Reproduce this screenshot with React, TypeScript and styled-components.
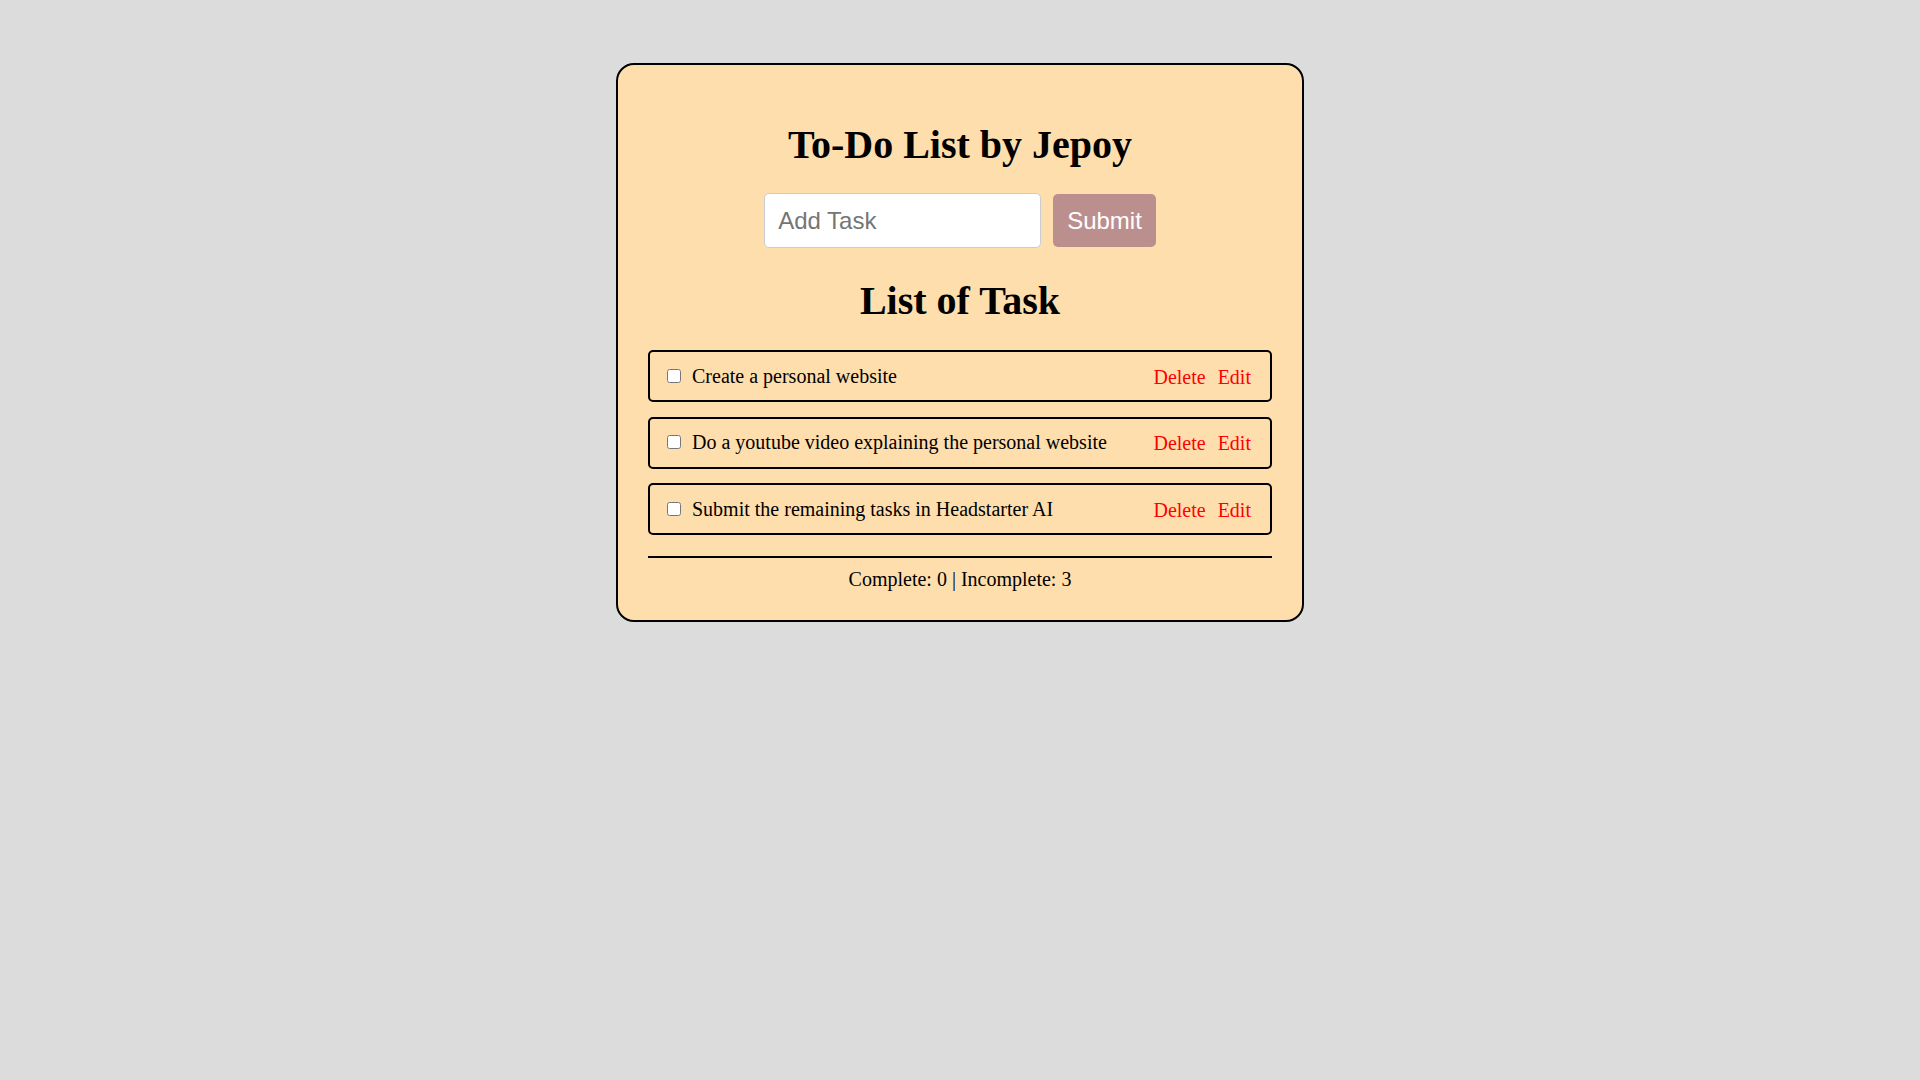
import React, { useState } from 'react';
import styled, { createGlobalStyle } from 'styled-components';

const GlobalStyle = createGlobalStyle`
  html, body {
    margin: 0;
    padding: 0;
    background: #dcdcdc;
    font-family: "Liberation Serif", "Times New Roman", serif;
  }
`;

const Page = styled.div`
  min-height: 100vh;
  display: flex;
  justify-content: center;
  align-items: flex-start;
  padding-top: 63px;
  box-sizing: border-box;
`;

const Card = styled.div`
  width: 688px;
  box-sizing: border-box;
  background: #ffdead;
  border: 2px solid #000;
  border-radius: 18px;
  padding: 56px 30px 29px;
  display: flex;
  flex-direction: column;
  align-items: center;
`;

const Heading = styled.h1<{ $gap: number }>`
  margin: 0 0 ${(p) => p.$gap}px;
  font-size: 40px;
  font-weight: bold;
  line-height: normal;
  color: #000;
  text-align: center;
`;

const Form = styled.form`
  display: flex;
  align-items: center;
  gap: 12px;
  margin-bottom: 29px;
`;

const TaskInput = styled.input`
  width: 277px;
  height: 55px;
  box-sizing: border-box;
  padding: 0 13px;
  border: 1px solid #c9ccd1;
  border-radius: 5px;
  background: #fff;
  font-family: "Liberation Sans", Arial, sans-serif;
  font-size: 24px;
  color: #000;
  outline: none;

  &::placeholder {
    color: #757575;
  }
`;

const SubmitButton = styled.button`
  height: 53px;
  padding: 0 14px;
  border: none;
  border-radius: 5px;
  background: #bc8f8f;
  color: #fff;
  font-family: "Liberation Sans", Arial, sans-serif;
  font-size: 24px;
  cursor: pointer;
`;

const List = styled.ul`
  list-style: none;
  margin: 0;
  padding: 0;
  width: 100%;
  display: flex;
  flex-direction: column;
  gap: 14.5px;
`;

const Row = styled.li`
  height: 52px;
  box-sizing: border-box;
  border: 2px solid #000;
  border-radius: 5px;
  padding: 0 13px 0 17px;
  display: flex;
  align-items: center;
`;

const Check = styled.input`
  width: 14px;
  height: 14px;
  margin: 0 11px 1px 0;
  flex-shrink: 0;
`;

const TaskText = styled.span<{ $done: boolean }>`
  flex: 1;
  font-size: 20px;
  color: #000;
  text-decoration: ${(p) => (p.$done ? 'line-through' : 'none')};
`;

const Action = styled.button`
  background: none;
  border: none;
  padding: 2px 6px 0;
  color: #ff0000;
  font-family: "Liberation Serif", "Times New Roman", serif;
  font-size: 20px;
  cursor: pointer;
`;

const Divider = styled.hr`
  width: 100%;
  margin: 21px 0 10px;
  border: none;
  border-top: 2px solid #000;
`;

const Summary = styled.p`
  margin: 0;
  font-size: 20px;
  line-height: normal;
  color: #000;
`;

type Task = { id: number; text: string; done: boolean };

const initialTasks: Task[] = [
  { id: 1, text: 'Create a personal website', done: false },
  { id: 2, text: 'Do a youtube video explaining the personal website', done: false },
  { id: 3, text: 'Submit the remaining tasks in Headstarter AI', done: false },
];

export default function App() {
  const [tasks, setTasks] = useState<Task[]>(initialTasks);
  const [draft, setDraft] = useState('');

  const addTask = (e: React.FormEvent) => {
    e.preventDefault();
    if (!draft.trim()) return;
    setTasks([...tasks, { id: Date.now(), text: draft.trim(), done: false }]);
    setDraft('');
  };

  const toggle = (id: number) =>
    setTasks(tasks.map((t) => (t.id === id ? { ...t, done: !t.done } : t)));

  const remove = (id: number) => setTasks(tasks.filter((t) => t.id !== id));

  const edit = (id: number) => {
    const t = tasks.find((x) => x.id === id);
    if (!t) return;
    const next = window.prompt('Edit task', t.text);
    if (next) setTasks(tasks.map((x) => (x.id === id ? { ...x, text: next } : x)));
  };

  const complete = tasks.filter((t) => t.done).length;

  return (
    <>
      <GlobalStyle />
      <Page>
        <Card>
          <Heading $gap={25}>To-Do List by Jepoy</Heading>
          <Form onSubmit={addTask}>
            <TaskInput
              placeholder="Add Task"
              value={draft}
              onChange={(e) => setDraft(e.target.value)}
            />
            <SubmitButton type="submit">Submit</SubmitButton>
          </Form>
          <Heading $gap={26}>List of Task</Heading>
          <List>
            {tasks.map((t) => (
              <Row key={t.id}>
                <Check type="checkbox" checked={t.done} onChange={() => toggle(t.id)} />
                <TaskText $done={t.done}>{t.text}</TaskText>
                <Action onClick={() => remove(t.id)}>Delete</Action>
                <Action onClick={() => edit(t.id)}>Edit</Action>
              </Row>
            ))}
          </List>
          <Divider />
          <Summary>
            Complete: {complete} | Incomplete: {tasks.length - complete}
          </Summary>
        </Card>
      </Page>
    </>
  );
}
